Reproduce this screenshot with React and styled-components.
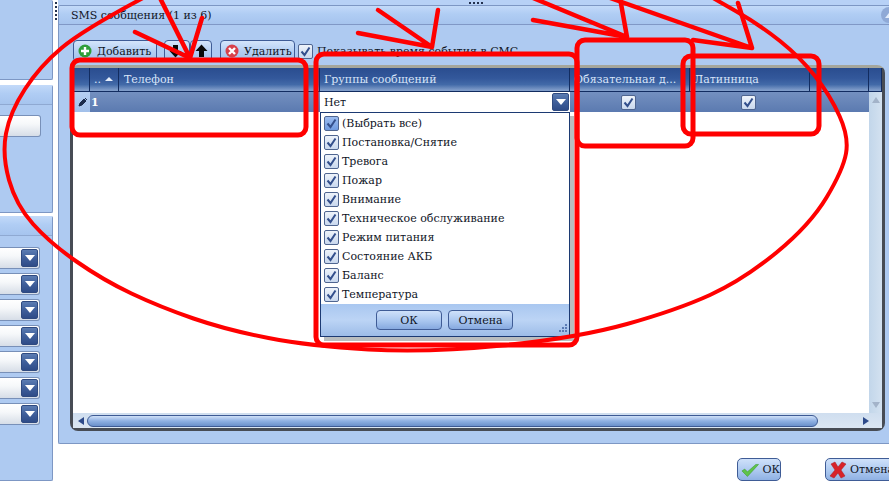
import React from "react";
import styled, { createGlobalStyle, css } from "styled-components";

const GlobalStyle = createGlobalStyle`
  html, body { margin: 0; padding: 0; background: #fff; }
  * { box-sizing: border-box; }
`;

const PANEL = "#aecaf1";
const EDGE = "#7d97c4";
const NAVY = "#1c3a73";
const BAND = "linear-gradient(#c3daf9, #b0cdf4 45%, #a6c4ee)";
const HEAD_COLUMNS = "17px 29px 201px 250px 120px 120px 59px 13px";

const Page = styled.div`
  position: relative;
  width: 889px;
  height: 483px;
  overflow: hidden;
  display: flex;
  background: #fff;
  font-family: "DejaVu Serif", "Liberation Serif", serif;
  font-size: 11px;
  color: #10151f;
`;

const Sidebar = styled.aside`
  width: 53px;
  display: flex;
  flex-direction: column;
`;

const SidePanel = styled.section`
  height: ${(p) => p.$height}px;
  margin-bottom: ${(p) => p.$gap || 0}px;
  background: ${PANEL};
  border-right: 1px solid ${EDGE};
  border-bottom: 1px solid ${EDGE};
  border-radius: 0 2px 2px 0;
`;

const SideHead = styled.div`
  height: 20px;
  background: ${BAND};
  border-bottom: 1px solid #8fa9d2;
`;

const SideBody = styled.div`
  display: flex;
  flex-direction: column;
  gap: 4px;
  padding: ${(p) => p.$top}px ${(p) => p.$right}px 0 0;
`;

const fieldLook = css`
  height: 22px;
  display: flex;
  align-items: center;
  justify-content: flex-end;
  padding-right: 1px;
  background: linear-gradient(#fff, #f6f8fa 40%, #d6dde7);
  border: 1px solid #7890b8;
  border-left: none;
  border-radius: 0 3px 3px 0;
`;

const SideField = styled.div`
  ${fieldLook}
`;

const Arrow = styled.i`
  display: block;
  width: 0;
  height: 0;
  border-left: 5px solid transparent;
  border-right: 5px solid transparent;
  border-top: 6px solid #fff;
`;

const DropButton = styled.span`
  width: 17px;
  height: 18px;
  display: flex;
  align-items: center;
  justify-content: center;
  background: linear-gradient(#5c7db3, #3f5f9b 50%, #2f4c88);
  border: 1px solid #2f4a80;
  border-radius: 2px;
`;

const Splitter = styled.div`
  width: 5px;
  padding-top: 2px;
  display: flex;
  flex-direction: column;
  gap: 2px;
  align-items: center;
`;

const Dot = styled.i`
  width: 2px;
  height: 2px;
  background: #23324f;
`;

const Main = styled.main`
  flex: 1;
  display: flex;
  flex-direction: column;
  min-width: 0;
`;

const TopSplitter = styled.div`
  height: 5px;
  background: #b7d1f6;
  display: flex;
  justify-content: center;
  align-items: center;
  gap: 2px;
  padding-right: 1px;
  padding-left: 6px;
`;

const Panel = styled.section`
  height: 439px;
  background: ${PANEL};
  border: 1px solid ${EDGE};
  border-right: none;
  border-radius: 2px 0 0 2px;
  overflow: hidden;
`;

const TitleBar = styled.header`
  height: 19px;
  display: flex;
  align-items: center;
  justify-content: space-between;
  padding-left: 12px;
  background: ${BAND};
  border-bottom: 1px solid #8098c6;
`;

const Collapse = styled.span`
  width: 16px;
  height: 16px;
  margin-right: -8px;
  flex: none;
  display: flex;
  align-items: center;
  justify-content: center;
  border-radius: 50%;
  background: #8fa9d6;
  &::before {
    content: "";
    border-left: 4px solid transparent;
    border-right: 4px solid transparent;
    border-bottom: 5px solid #e3edfb;
  }
`;

const Toolbar = styled.div`
  height: 25px;
  margin-top: 15px;
  padding-left: 14px;
  display: flex;
  align-items: flex-start;
`;

const ToolButton = styled.button`
  width: ${(p) => p.$width}px;
  height: 22px;
  margin-right: ${(p) => p.$gap || 0}px;
  padding: 0 0 0 4px;
  display: flex;
  align-items: center;
  gap: 5px;
  font: inherit;
  color: inherit;
  background: linear-gradient(#d4e5fb, #b4cff3 50%, #a0bfe9);
  border: 1px solid #3f5c96;
  border-radius: 4px;
  white-space: nowrap;
`;

const CheckBox = styled.span`
  width: 15px;
  height: 15px;
  margin: ${(p) => (p.$inToolbar ? "4px 4px 0 0" : "0")};
  display: flex;
  align-items: center;
  justify-content: center;
  background: ${(p) => (p.$active ? "linear-gradient(#9dbdf0, #6f9ae0)" : "linear-gradient(#eef3fa, #c9d8ee)")};
  border: 1px solid #4f6590;
  border-radius: 2px;
  flex: none;
`;

const ToolLabel = styled.span`
  margin-top: 5px;
  white-space: nowrap;
`;

const GridFrame = styled.div`
  width: 815px;
  height: 366px;
  margin-left: 11px;
  padding: 3px;
  display: flex;
  flex-direction: column;
  background: linear-gradient(#a5a69c 0, #a5a69c 3px, #474c55 3px);
  border-radius: 8px;
`;

const HeaderRow = styled.div`
  height: 24px;
  flex: none;
  display: grid;
  grid-template-columns: ${HEAD_COLUMNS};
`;

const HeaderCell = styled.div`
  display: flex;
  align-items: center;
  gap: 4px;
  padding-left: ${(p) => p.$pad || 4}px;
  padding-bottom: 1px;
  color: #d8e5f9;
  white-space: nowrap;
  overflow: hidden;
  background: linear-gradient(#2a4d8f, #33589b 45%, #426aa8 72%, #7f9cc9 96%);
  border-right: 1px solid #122c60;
  border-bottom: 1px solid #122c60;
`;

const SortUp = styled.i`
  border-left: 4px solid transparent;
  border-right: 4px solid transparent;
  border-bottom: 4px solid #e4edfa;
`;

const GridBody = styled.div`
  height: 321px;
  flex: none;
  display: flex;
`;

const Rows = styled.div`
  position: relative;
  flex: 1;
  background: #fff;
`;

const DataRow = styled.div`
  height: 20px;
  display: grid;
  grid-template-columns: 17px 230px 250px 120px 120px 59px;
`;

const RowCell = styled.div`
  display: flex;
  align-items: center;
  justify-content: ${(p) => (p.$center ? "center" : "flex-start")};
  padding-left: ${(p) => (p.$center ? 0 : 1)}px;
  padding-right: ${(p) => (p.$center ? 4 : 0)}px;
  color: #fff;
  font-weight: bold;
  background: linear-gradient(#7490c0, #5b7ab0);
`;

const RowMarker = styled.div`
  display: flex;
  align-items: center;
  justify-content: center;
  padding-left: 3px;
  background: linear-gradient(#b6cff3, #a2c0ea);
`;

const GroupCell = styled.div`
  display: flex;
  align-items: center;
  justify-content: space-between;
  padding: 0 1px 0 4px;
  background: #fff;
`;

const Popup = styled.div`
  position: absolute;
  left: 247px;
  top: 20px;
  width: 250px;
  height: 225px;
  display: flex;
  flex-direction: column;
  background: #fff;
  border: 1px solid ${NAVY};
  box-shadow: 4px 4px 0 #b9bdbf;
`;

const OptionList = styled.ul`
  flex: 1;
  margin: 0;
  padding: 1px 0 0 3px;
  list-style: none;
`;

const Option = styled.li`
  height: 19px;
  display: flex;
  align-items: center;
  gap: 3px;
`;

const PopupFooter = styled.footer`
  height: 32px;
  padding: 6px 0 0 55px;
  position: relative;
  display: flex;
  gap: 6px;
  background: linear-gradient(#a9c7f0, #bcd4f5 50%, #9dbce8);
`;

const PopupButton = styled.button`
  width: ${(p) => p.$width}px;
  height: 20px;
  padding: 0;
  font: inherit;
  color: inherit;
  background: linear-gradient(#cfe1fa, #a9c6ef 55%, #86a9df);
  border: 1px solid #3f5c96;
  border-radius: 4px;
`;

const Grip = styled.svg`
  position: absolute;
  right: 1px;
  bottom: 1px;
`;

const VScroll = styled.div`
  width: 13px;
  padding: 5px 0;
  display: flex;
  flex-direction: column;
  justify-content: space-between;
  align-items: center;
  background: linear-gradient(90deg, #c2d6ea, #d3e1f0);
`;

const ScrollArrow = styled.i`
  width: 0;
  height: 0;
  border-left: 4px solid transparent;
  border-right: 4px solid transparent;
  ${(p) => (p.$down ? "border-top" : "border-bottom")}: 6px solid #a3b3c9;
`;

const HScroll = styled.div`
  height: 15px;
  flex: none;
  display: flex;
  align-items: center;
  padding: 0 13px 0 5px;
  gap: 3px;
  background: linear-gradient(#cfdeef, #dbe6f3);
`;

const HArrow = styled.i`
  width: 0;
  height: 0;
  flex: none;
  border-top: 4px solid transparent;
  border-bottom: 4px solid transparent;
  ${(p) => (p.$right ? "border-left" : "border-right")}: 6px solid #2d4a8a;
`;

const Thumb = styled.div`
  width: 731px;
  height: 12px;
  margin-right: auto;
  background: linear-gradient(#cfe0f8, #8fb0e2 50%, #6a90cb);
  border: 1px solid #3d5a94;
  border-radius: 6px;
`;

const DialogFooter = styled.footer`
  margin-top: 14px;
  padding-left: 679px;
  display: flex;
  gap: 44px;
`;

const DialogButton = styled.button`
  width: ${(p) => p.$width}px;
  height: 23px;
  flex: none;
  padding: 0 0 0 3px;
  display: flex;
  align-items: center;
  gap: 3px;
  font: inherit;
  color: inherit;
  white-space: nowrap;
  background: linear-gradient(#cfe1fa, #adc9f0 55%, #8fb1e3);
  border: 1px solid #3f5c96;
  border-radius: 5px;
`;

const Overlay = styled.svg`
  position: absolute;
  left: 0;
  top: 0;
  pointer-events: none;
`;

const Check = ({ color = "#334f8c" }) => (
  <svg width="11" height="11" viewBox="0 0 11 11">
    <path d="M1.5 5.5 L4.5 9 L9.5 1.5" fill="none" stroke={color} strokeWidth="2" />
  </svg>
);

const CircleIcon = ({ fill, children }) => (
  <svg width="14" height="14" viewBox="0 0 14 14">
    <circle cx="7" cy="7" r="6.5" fill={fill} />
    <path d={children} stroke="#fff" strokeWidth="2.4" fill="none" />
  </svg>
);

const BoldArrow = ({ down }) => (
  <svg width="13" height="14" viewBox="0 0 13 14">
    <path
      d={down ? "M4 1h5v6h3.5L6.5 13.5 .5 7H4z" : "M4 13h5V7h3.5L6.5 .5 .5 7H4z"}
      fill="#0a0a0a"
    />
  </svg>
);

const Pen = () => (
  <svg width="10" height="10" viewBox="0 0 10 10">
    <path d="M1 9l1-3 4-4 2 2-4 4z M7 1l2 2" fill="#1c2c4c" stroke="#1c2c4c" strokeWidth="1" />
  </svg>
);

const OkMark = () => (
  <svg width="20" height="16" viewBox="0 0 20 16">
    <path d="M1 9l3-2 3 3 9-8 3 0-12 13z" fill="#5fc34a" stroke="#3c9a33" strokeWidth=".6" />
  </svg>
);

const CancelMark = () => (
  <svg width="18" height="18" viewBox="0 0 18 18">
    <path d="M2 3l4-2 3 5 4-5 4 2-5 6 4 6-4 2-3-5-4 5-4-2 5-6z" fill="#d8232a" stroke="#a81a20" strokeWidth=".5" />
  </svg>
);

// red hand-drawn marks lying over the screenshot
const smooth = (pts) => {
  let d = `M${pts[0][0]} ${pts[0][1]}`;
  for (let i = 1; i < pts.length - 1; i++) {
    const mx = (pts[i][0] + pts[i + 1][0]) / 2;
    const my = (pts[i][1] + pts[i + 1][1]) / 2;
    d += ` Q${pts[i][0]} ${pts[i][1]} ${mx} ${my}`;
  }
  const last = pts[pts.length - 1];
  return `${d} L${last[0]} ${last[1]}`;
};

const ELLIPSE = [
  [143, -2], [83, 30], [40, 66], [10, 112], [2, 155], [16, 205], [50, 243], [103, 280],
  [160, 307], [227, 330], [310, 346], [427, 353], [577, 338], [677, 310], [743, 280],
  [810, 225], [843, 170], [849, 137], [830, 95], [800, 57], [760, 25], [713, -2],
];

const BOXES = [
  { x: 72, y: 60, w: 234, h: 75 },
  { x: 316, y: 54, w: 261, h: 291 },
  { x: 577, y: 40, w: 116, h: 106 },
  { x: 683, y: 56, w: 136, h: 78 },
];

const ARROWS = [
  "M160 -2L190 58 M135 32L190 58 M202 18L190 58",
  "M432 47L438 10 M432 47L378 10 M432 47L358 33",
  "M627 37L533 -2 M627 37L533 20 M627 37L620 -2",
  "M752 48L610 -2 M752 48L738 3 M752 48L693 40",
];

const Annotations = () => (
  <Overlay width="889" height="483" viewBox="0 0 889 483">
    <g fill="none" stroke="#ff0000">
      <path d={smooth(ELLIPSE)} strokeWidth="4" />
      {BOXES.map((b) => (
        <rect key={b.x} x={b.x} y={b.y} width={b.w} height={b.h} rx="8" strokeWidth="5" />
      ))}
      {ARROWS.map((d) => (
        <path key={d} d={d} strokeWidth="4.5" strokeLinecap="round" />
      ))}
    </g>
  </Overlay>
);

const OPTIONS = [
  "(Выбрать все)",
  "Постановка/Снятие",
  "Тревога",
  "Пожар",
  "Внимание",
  "Техническое обслуживание",
  "Режим питания",
  "Состояние АКБ",
  "Баланс",
  "Температура",
];

const SELECTS = [0, 1, 2, 3, 4, 5, 6];

export default function App() {
  return (
    <Page>
      <GlobalStyle />
      <Sidebar>
        <SidePanel $height={80} $gap={5} />
        <SidePanel $height={128} $gap={3}>
          <SideHead />
          <SideBody $top={10} $right={11}>
            <SideField />
          </SideBody>
        </SidePanel>
        <SidePanel $height={265}>
          <SideHead />
          <SideBody $top={11} $right={12}>
            {SELECTS.map((n) => (
              <SideField key={n}>
                <DropButton><Arrow /></DropButton>
              </SideField>
            ))}
          </SideBody>
        </SidePanel>
      </Sidebar>
      <Splitter>
        <Dot /><Dot /><Dot /><Dot /><Dot />
      </Splitter>
      <Main>
        <TopSplitter>
          <Dot /><Dot /><Dot /><Dot />
        </TopSplitter>
        <Panel>
          <TitleBar>
            SMS сообщения (1 из 6)
            <Collapse />
          </TitleBar>
          <Toolbar>
            <ToolButton $width={84} $gap={7}>
              <CircleIcon fill="#2f9e3a">M7 3v8M3 7h8</CircleIcon>
              Добавить
            </ToolButton>
            <ToolButton $width={26}><BoldArrow down /></ToolButton>
            <ToolButton $width={22} $gap={8}><BoldArrow /></ToolButton>
            <ToolButton $width={75} $gap={3}>
              <CircleIcon fill="#d8404a">M4 4l6 6M10 4l-6 6</CircleIcon>
              Удалить
            </ToolButton>
            <CheckBox $inToolbar><Check /></CheckBox>
            <ToolLabel>Показывать время события в СМС</ToolLabel>
          </Toolbar>
          <GridFrame>
            <HeaderRow>
              <HeaderCell />
              <HeaderCell>.. <SortUp /></HeaderCell>
              <HeaderCell $pad={5}>Телефон</HeaderCell>
              <HeaderCell>Группы сообщений</HeaderCell>
              <HeaderCell>Обязательная д...</HeaderCell>
              <HeaderCell>Латинница</HeaderCell>
              <HeaderCell />
              <HeaderCell />
            </HeaderRow>
            <GridBody>
              <Rows>
                <DataRow>
                  <RowMarker><Pen /></RowMarker>
                  <RowCell>1</RowCell>
                  <GroupCell>
                    Нет
                    <DropButton><Arrow /></DropButton>
                  </GroupCell>
                  <RowCell $center><CheckBox><Check /></CheckBox></RowCell>
                  <RowCell $center><CheckBox><Check /></CheckBox></RowCell>
                  <RowCell />
                </DataRow>
                <Popup>
                  <OptionList>
                    {OPTIONS.map((label, i) => (
                      <Option key={label}>
                        <CheckBox $active={i === 0}><Check /></CheckBox>
                        {label}
                      </Option>
                    ))}
                  </OptionList>
                  <PopupFooter>
                    <PopupButton $width={66}>ОК</PopupButton>
                    <PopupButton $width={65}>Отмена</PopupButton>
                    <Grip width="12" height="12" viewBox="0 0 12 12">
                      <path d="M9 1h2v2H9z M6 4h2v2H6z M9 4h2v2H9z M3 7h2v2H3z M6 7h2v2H6z M9 7h2v2H9z" fill="#5b7cb5" />
                    </Grip>
                  </PopupFooter>
                </Popup>
              </Rows>
              <VScroll>
                <ScrollArrow />
                <ScrollArrow $down />
              </VScroll>
            </GridBody>
            <HScroll>
              <HArrow />
              <Thumb />
              <HArrow $right />
            </HScroll>
          </GridFrame>
        </Panel>
        <DialogFooter>
          <DialogButton $width={44}><OkMark />ОК</DialogButton>
          <DialogButton $width={90}><CancelMark />Отмена</DialogButton>
        </DialogFooter>
      </Main>
      <Annotations />
    </Page>
  );
}
